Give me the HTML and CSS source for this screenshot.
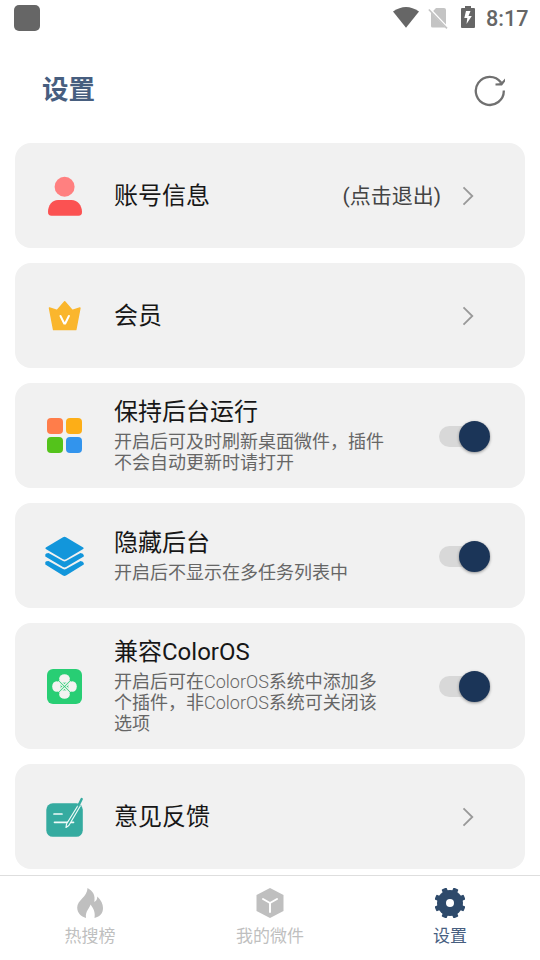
FILE: index.html
```html
<!DOCTYPE html>
<html lang="zh-CN">
<head>
<meta charset="utf-8">
<title>设置</title>
<link rel="stylesheet" href="styles.css">
</head>
<body>
<div class="screen">
  <div class="status">
    <span class="status-app"></span>
    <svg class="wifi" width="26" height="21" viewBox="0 0 26 21"><path fill="#666" d="M0 4.600Q13-4.400 26 4.600L13 20.800z"/></svg>
    <svg class="sim" width="20" height="22" viewBox="0 0 20 22"><path fill="#c4c4c4" d="M8 1h8q2 0 2 2v14.500L5.200 4z M3 5.600l14.400 15H4.500Q3 20.600 3 19z"/><path stroke="#c4c4c4" stroke-width="1.600" d="M.8 2.500 19 21.400"/></svg>
    <svg class="battery" width="14" height="22" viewBox="0 0 14 22"><path fill="#666" d="M4 0h6v2h3q1 0 1 1v18q0 1-1 1H1q-1 0-1-1V3q0-1 1-1h3z"/><path fill="#fff" d="M9.500 5H5L3.300 12h3L5.500 18 10.800 10H7.500z"/></svg>
    <span class="clock">8:17</span>
  </div>
  <header class="header">
    <h1>设置</h1>
    <svg width="32" height="32" viewBox="0 0 32 32"><path fill="none" stroke="#707070" stroke-width="2.300" d="M29.800 15.500A14 14 0 1 1 27 7.500"/><path fill="#707070" d="M31 3.500v3L28 10.500h-6.500V8.400l4-.2 3-2z"/></svg>
  </header>
  <main class="list">
    <section class="card">
      <svg class="icon" width="40" height="40" viewBox="0 0 40 40"><circle cx="19.600" cy="10.800" r="10" fill="#ff8080"/><path fill="#fb5252" d="M13 24h13.500C32.500 24 37 29.500 37 36Q37 39.800 33.500 39.800h-27Q3 39.800 3 36C3 29.500 7 24 13 24z"/></svg>
      <div class="text"><h2>账号信息</h2></div>
      <span class="value">(点击退出)</span>
      <svg class="chevron" width="12" height="20" viewBox="0 0 12 20"><path d="M1.500 1.300 10.300 10 1.500 18.700"/></svg>
    </section>
    <section class="card">
      <svg class="icon" width="40" height="40" viewBox="0 0 40 40"><path fill="#fab62d" stroke="#fab62d" stroke-width="1.500" stroke-linejoin="round" d="M4.500 12 12.100 14.500 19.700 5.800 27.300 14.500 34.900 12 30.800 33.500H8.600z"/><path fill="none" stroke="#fff" stroke-width="2" stroke-linecap="round" stroke-linejoin="round" d="M15.500 20 19.200 27.500h1l3.700-7.500"/></svg>
      <div class="text"><h2>会员</h2></div>
      <svg class="chevron" width="12" height="20" viewBox="0 0 12 20"><path d="M1.500 1.300 10.300 10 1.500 18.700"/></svg>
    </section>
    <section class="card multiline">
      <svg class="icon" width="40" height="40" viewBox="0 0 40 40"><rect x="2" y="2" width="16" height="16" rx="4" fill="#ff7d4a"/><rect x="21" y="2" width="16" height="16" rx="4" fill="#fdae17"/><rect x="2" y="21" width="16" height="16" rx="4" fill="#54c31b"/><rect x="21" y="21" width="16" height="16" rx="4" fill="#3294ed"/></svg>
      <div class="text"><h2>保持后台运行</h2><p>开启后可及时刷新桌面微件，插件<br>不会自动更新时请打开</p></div>
      <span class="switch"><span class="thumb"></span></span>
    </section>
    <section class="card">
      <svg class="icon" width="40" height="40" viewBox="0 0 40 40"><g fill="#1296db"><path d="M18 1.200q1.500-.8 3 0L38.200 11.500q1 .7 0 1.500L21 23.300q-1.500.8-3 0L.8 13q-.8-.8 0-1.500z"/><path d="M.3 18.500Q.5 17 3.500 17L18 25q1.500.8 3 0L35.500 17q3 .2 3.300 2.200v1.300L21 31q-1.500.8-3 0L.3 20.500z"/><path d="M.3 26Q1 25 3.500 25L18 33q1.500.8 3 0L35.500 25q3 .2 3.300 2.200v1.300L21 39.500q-1.500.8-3 0L.3 28.500z"/></g></svg>
      <div class="text"><h2>隐藏后台</h2><p>开启后不显示在多任务列表中</p></div>
      <span class="switch"><span class="thumb"></span></span>
    </section>
    <section class="card multiline tall">
      <svg class="icon" width="40" height="40" viewBox="0 0 40 40"><rect x="2" y="2" width="35" height="35" rx="6" fill="#28ce74"/><g transform="translate(-.5 -.5)"><g fill="#f3f3f1"><ellipse cx="20" cy="12" rx="5.300" ry="4.300"/><ellipse cx="20" cy="28" rx="5.300" ry="4.300"/><ellipse cx="12" cy="20" rx="4.300" ry="5.300"/><ellipse cx="28" cy="20" rx="4.300" ry="5.300"/></g><path fill="none" stroke="#f3f3f1" stroke-width="1.300" d="M15 13.500 20 18.500 25 13.500M15 26.500 20 21.500 25 26.500M13.500 15 18.500 20 13.500 25M26.500 15 21.500 20 26.500 25"/></g></svg>
      <div class="text"><h2>兼容ColorOS</h2><p>开启后可在<span class="latin">ColorOS</span>系统中添加多<br>个插件，非<span class="latin">ColorOS</span>系统可关闭该<br>选项</p></div>
      <span class="switch"><span class="thumb"></span></span>
    </section>
    <section class="card">
      <svg class="icon" width="40" height="40" viewBox="0 0 40 40"><rect x="1.300" y="6.300" width="36.500" height="33.500" rx="6.500" fill="#35aba0"/><path stroke="#eefaf8" stroke-width="1.700" stroke-linecap="round" d="M9 17h8M9.500 25.300h19"/><path fill="#35aba0" stroke="#eefaf8" stroke-width="1.200" stroke-linejoin="round" d="M33.300 8 21.500 27 21 30.500 23.800 28.500 35.300 9z"/><path fill="none" stroke="#35aba0" stroke-width="2.400" stroke-linecap="round" d="M33.500 8.500 36.700 2"/></svg>
      <div class="text"><h2>意见反馈</h2></div>
      <svg class="chevron" width="12" height="20" viewBox="0 0 12 20"><path d="M1.500 1.300 10.300 10 1.500 18.700"/></svg>
    </section>
  </main>
  <nav class="tabs">
    <div class="tab">
      <svg width="30" height="30" viewBox="0 0 30 30"><path fill="#bfbfbf" d="M12.500 0C18 3 20.500 7 19.300 14q3-1.500 3-5.500C26 12 28 16 28 20c0 5-2.500 8.300-8.500 10 1-6-1-9.500-4-13.500C15 20 10 23 11 30 6 28.500 2.200 25 2.200 19.500 2.200 12 12.500 9 12.500 0z"/></svg>
      <span>热搜榜</span>
    </div>
    <div class="tab">
      <svg width="30" height="30" viewBox="0 0 30 30"><path fill="#bfbfbf" d="M15 0 28.500 7v16L15 30 1.500 23V7z"/><path fill="none" stroke="#fff" stroke-width="2" stroke-linecap="round" stroke-linejoin="round" d="M8 11 15 15l7-4M15 15v9"/></svg>
      <span>我的微件</span>
    </div>
    <div class="tab active">
      <svg width="30" height="30" viewBox="0 0 30 30"><g fill="#2e4a6b"><circle cx="15" cy="15" r="13"/><rect x="12.300" y="-.7" width="5.400" height="31.400" rx="1" transform="rotate(22.500 15 15)"/><rect x="12.300" y="-.7" width="5.400" height="31.400" rx="1" transform="rotate(67.500 15 15)"/><rect x="12.300" y="-.7" width="5.400" height="31.400" rx="1" transform="rotate(112.500 15 15)"/><rect x="12.300" y="-.7" width="5.400" height="31.400" rx="1" transform="rotate(157.500 15 15)"/></g><circle cx="15" cy="15" r="4" fill="#fff"/></svg>
      <span>设置</span>
    </div>
  </nav>
</div>
</body>
</html>
```

FILE: styles.css
```css
* { box-sizing: border-box; }
body { margin: 0; background: #fff; font-family: Roboto, "Noto Sans CJK SC", sans-serif; }
h1, h2, p { margin: 0; font-weight: 400; }
svg { display: block; flex: none; }
.screen { width: 540px; height: 960px; display: flex; flex-direction: column; overflow: hidden; }

.status { height: 36px; display: flex; align-items: center; padding: 0 12px 0 14px; }
.status-app { width: 26px; height: 26px; border-radius: 5px; background: #666; margin-right: auto; }
.wifi { margin: 0 9px 1px 0; }
.sim { margin-right: 13px; }
.battery { margin: 0 11px 2px 0; }
.clock { font-size: 21.6px; line-height: 36px; font-weight: 500; color: #666; width: 42px; white-space: nowrap; padding-top: 1px; }

.header { height: 107px; display: flex; align-items: center; justify-content: space-between; padding: 0 34px 0 42px; }
.header h1 { font-size: 26.5px; line-height: 36px; font-weight: 700; color: #475e7f; }
.header svg { margin-top: 2px; }

.list { flex: 1; min-height: 0; display: flex; flex-direction: column; gap: 15px; padding: 0 15px; }
.card { flex: none; height: 105px; display: flex; align-items: center; padding: 0 35px 0 30px; border-radius: 16px; background: #f1f1f1; }
.card.tall { height: 126px; }
.icon { margin-top: 1px; }
.text { flex: 1; margin-left: 29px; display: flex; flex-direction: column; gap: 5px; white-space: nowrap; }
.text h2 { font-size: 24px; line-height: 28px; color: #171717; padding-top: 1px; }
.text p { font-size: 18px; line-height: 21px; color: #666; }
.multiline .text { padding-bottom: 2px; }
.latin { font-weight: 300; }
.value { font-size: 21px; line-height: 28px; color: #444; margin-right: 21px; }
.chevron { margin: 1px 16px 0 0; }
.chevron path { fill: none; stroke: #999; stroke-width: 1.8; }
.switch { width: 51px; height: 21px; display: flex; justify-content: flex-end; align-items: center; background: linear-gradient(#d8d8d8, #d8d8d8) 0 0 / 40px 21px no-repeat; border-radius: 10.5px; margin-top: 1px; }
.thumb { flex: none; width: 31px; height: 31px; border-radius: 50%; background: #1b3558; box-shadow: 0 1px 3px rgba(0, 0, 0, .4); }

.tabs { flex: none; height: 85px; border-top: 1px solid #dedede; display: flex; }
.tab { flex: 1; display: flex; flex-direction: column; align-items: center; padding-top: 12px; color: #bfbfbf; font-size: 17px; gap: 8px; }
.tab span { line-height: 20px; }
.tab.active { color: #475e7f; }
```
